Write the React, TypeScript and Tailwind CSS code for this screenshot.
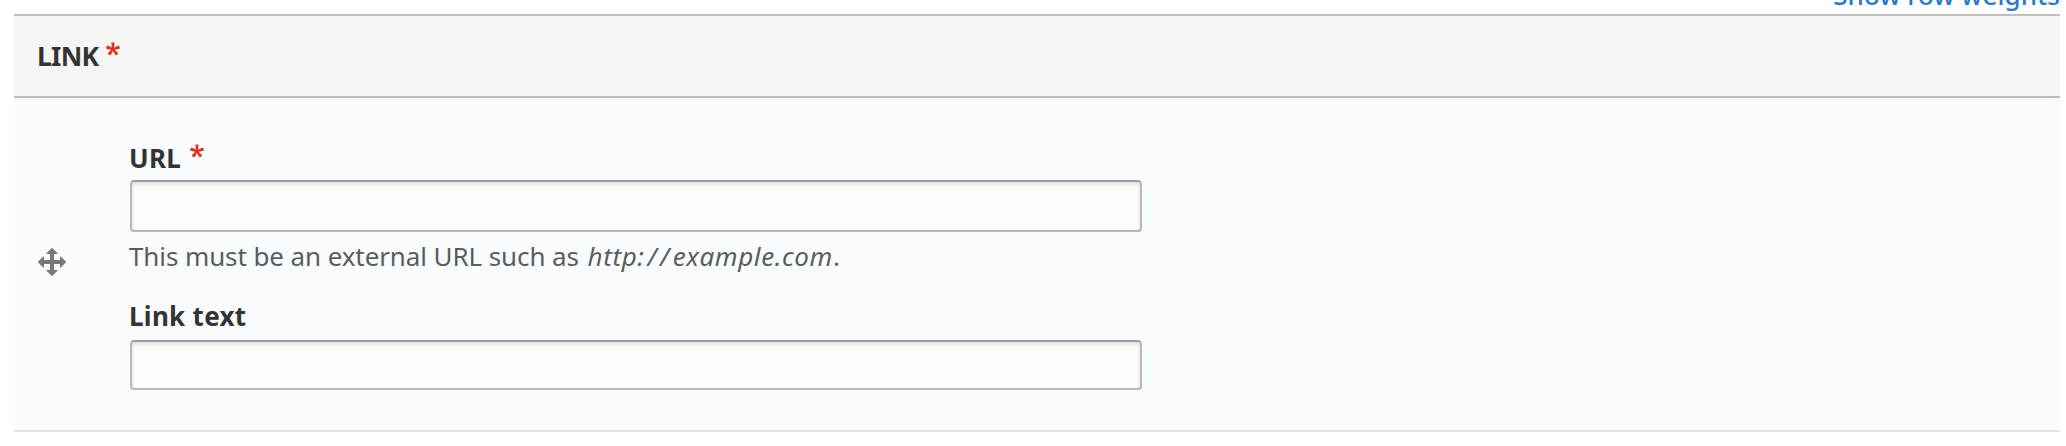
function RequiredMark({ className }: { className: string }) {
  return (
    <svg viewBox="0 0 16 16" aria-label="required" className={`h-[14px] w-[14px] shrink-0 fill-[#e03021] ${className}`}>
      <path d="M0,7.562l1.114-3.438c2.565,0.906,4.43,1.688,5.59,2.35C6.398,3.553,6.237,1.544,6.22,0.447h3.511c-0.05,1.597-0.234,3.6-0.558,6.003c1.664-0.838,3.566-1.613,5.714-2.325L16,7.562c-2.05,0.678-4.06,1.131-6.028,1.356c0.984,0.856,2.372,2.381,4.166,4.575l-2.906,2.059c-0.935-1.274-2.041-3.009-3.316-5.206c-1.194,2.275-2.244,4.013-3.147,5.206l-2.856-2.059c1.872-2.307,3.211-3.832,4.017-4.575C3.849,8.516,1.872,8.062,0,7.562z" />
    </svg>
  );
}

function MoveIcon() {
  return (
    <svg viewBox="0 0 16 16" className="h-8 w-8 fill-[#787878]">
      <path d="M14.904 7.753l-2.373-2.372c-.291-.292-.529-.193-.529.22v1.399h-3v-3h1.398c.413 0 .512-.239.221-.53l-2.371-2.372c-.137-.136-.36-.136-.497 0l-2.372 2.372c-.292.292-.193.53.22.53h1.399v3h-3v-1.369c0-.413-.239-.511-.53-.22l-2.372 2.372c-.136.136-.136.359 0 .494l2.372 2.372c.291.292.53.192.53-.219v-1.43h3v3h-1.4c-.413 0-.511.238-.22.529l2.374 2.373c.137.137.36.137.495 0l2.373-2.373c.29-.291.19-.529-.222-.529h-1.398v-3h3v1.4c0 .412.238.511.529.219l2.373-2.371c.137-.137.137-.359 0-.496z" />
    </svg>
  );
}

const inputStyle =
  "block w-[1012px] rounded-[4px] border-2 border-[#b8b8b8] border-t-[#999999] bg-[#fcfcfa] px-3 shadow-[inset_0_2px_4px_rgba(0,0,0,0.125)] outline-none";

export default function App() {
  return (
    <div className="flex h-[446px] w-[2066px] flex-col overflow-hidden bg-white pl-[14px] pr-[6px] font-['Noto_Sans',sans-serif] text-[26px] leading-[36px] text-[#333333]">
      <div className="flex h-[14px] items-end justify-end pb-px">
        <a className="whitespace-nowrap font-medium tracking-[0.1px] text-[#2b78c5]">Show row weights</a>
      </div>
      <div className="flex h-[84px] shrink-0 items-center border-y-2 border-[#bfbfba] bg-[#f5f5f3] pl-[23px] font-bold">
        <span className="text-[26.5px] tracking-[-0.7px]">LINK</span>
        <RequiredMark className="mb-[14px] ml-[8px]" />
      </div>
      <div className="flex h-[334px] shrink-0 border-b-2 border-[#e6e4df] bg-[#f8fcff]">
        <div className="flex h-[328px] w-[116px] items-center pl-[22px]">
          <MoveIcon />
        </div>
        <div className="flex flex-col">
          <label className="-ml-px mb-[2px] mt-[40px] flex h-[40px] items-center font-bold">
            <span className="tracking-[0.3px]">URL</span>
            <RequiredMark className="mb-[15px] ml-[9px]" />
          </label>
          <input className={`${inputStyle} h-[52px]`} />
          <p className="-ml-px mt-[6px] whitespace-nowrap tracking-[-0.1px] text-[#5c5c5b]">
            This must be an external URL such as{" "}
            <em className="ml-[2px] tracking-[0.6px]">
              http<span className="tracking-[3.4px]">://</span>example.com
            </em>
            .
          </p>
          <label className="-ml-px mt-[24px] h-[42px] font-bold tracking-[0.3px]">Link text</label>
          <input className={`${inputStyle} h-[50px]`} />
        </div>
      </div>
    </div>
  );
}
